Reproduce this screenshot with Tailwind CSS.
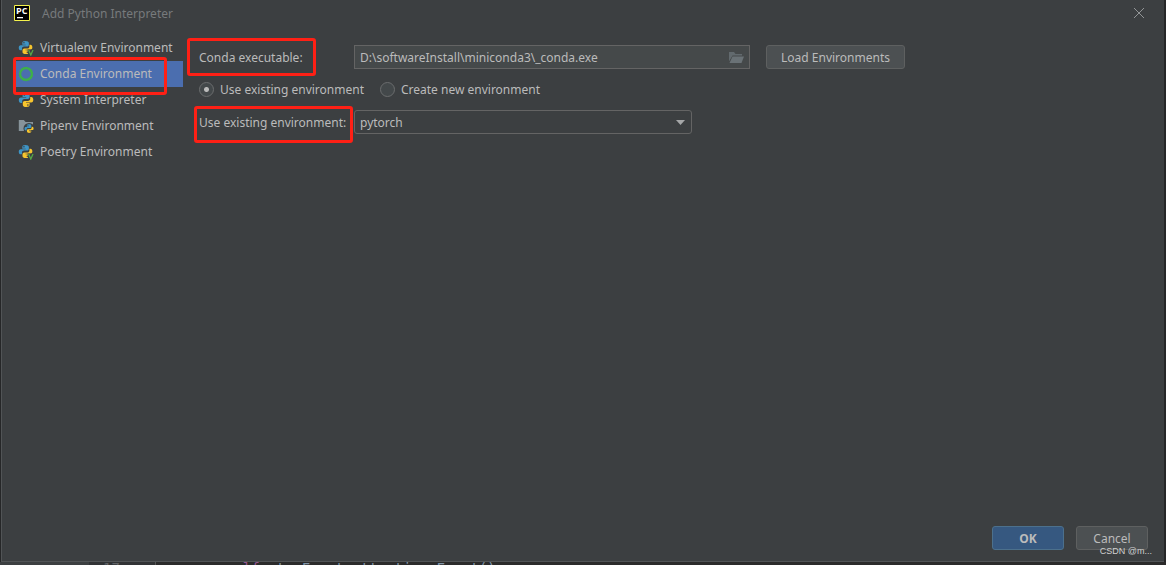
<!DOCTYPE html>
<html lang="en">
<head>
<meta charset="utf-8">
<title>Add Python Interpreter</title>
<script src="https://cdn.jsdelivr.net/npm/@tailwindcss/browser@4"></script>
</head>
<body class="flex h-screen flex-col overflow-hidden bg-[#262728] font-['Noto_Sans','Noto_Sans_CJK_SC',sans-serif] text-[12px] leading-5 text-[#bbbbbb]">
<svg class="hidden">
  <defs>
    <symbol id="python" viewBox="0 0 16 16">
      <path fill="#3e94c4" d="M7.8 1C5.4 1 4.6 2 4.6 3.3V5h3.6v.6H3C1.500 5.600.800 6.600.800 8.200S1.600 11 3 11h1.200V9.200c0-1.300 1-2.200 2.300-2.200h3.200c1.100 0 1.900-.9 1.900-2V3.300C11.600 1.800 10.300 1 7.800 1z"/>
      <circle cx="6.300" cy="3" r=".8" fill="#3c3f41"/>
      <path fill="#f7c52e" d="M8.400 15c2.400 0 3.200-1 3.200-2.300V11H8v-.6h5.200c1.500 0 2.100-1 2.100-2.600S14.600 5 13.200 5h-1v1.800c0 1.300-1 2.200-2.300 2.200H6.700c-1.100 0-1.900.9-1.900 2v1.700C4.800 14.200 6 15 8.400 15z"/>
      <circle cx="9.900" cy="13.100" r=".8" fill="#3c3f41"/>
    </symbol>
    <symbol id="pythonv" viewBox="0 0 16 16">
      <use href="#python" width="15" height="15"/>
      <path d="M9.500 9.500H16V16h-5.500z" fill="#3c3f41"/>
      <path d="M10.600 10l2.200 5 2.200-5" fill="none" stroke="#56a846" stroke-width="1.300"/>
    </symbol>
  </defs>
</svg>
<main class="relative mr-0.5 ml-px flex min-h-0 flex-1 flex-col border border-r-0 border-t-0 border-[#515456] bg-[#3c3f41]">
  <header class="flex h-[26px] shrink-0 items-center pr-[17px] pl-3 text-[#777a7c]">
    <svg class="size-4" viewBox="0 0 16 16"><path d="M.5.5h15v15H.5z" fill="#000" stroke="#f5f24d"/><text x="2" y="9" fill="#fff" font-family="Open Sans" font-weight="700" font-size="9">PC</text><path d="M3 12h6v1.300H3z" fill="#fff"/></svg>
    <h1 class="ml-3 flex-1 pt-0.5">Add Python Interpreter</h1>
    <button aria-label="Close" class="flex size-4 items-center justify-center"><svg class="size-3" viewBox="0 0 12 12"><path d="M1 1l10 10M11 1L1 11" stroke="#929596"/></svg></button>
  </header>
  <div class="flex min-h-0 flex-1 pt-[9px]">
    <nav class="ml-3.5 w-[167px] shrink-0 whitespace-nowrap">
      <a href="#" class="flex h-[26px] items-center gap-1.5 pl-0.5"><svg class="size-4 shrink-0"><use href="#pythonv"/></svg>Virtualenv Environment</a>
      <a href="#" aria-current="page" class="flex h-[26px] items-center gap-1.5 bg-[#4b6eaf] pl-0.5"><svg class="size-4" viewBox="0 0 16 16"><circle cx="8" cy="8" r="6" fill="none" stroke="#3eb049" stroke-width="2.500"/><circle cx="8" cy="8" r="7.300" fill="none" stroke="#4b6eaf" stroke-dasharray="1 2"/></svg>Conda Environment</a>
      <a href="#" class="flex h-[26px] items-center gap-1.5 pl-0.5"><svg class="size-4"><use href="#python"/></svg>System Interpreter</a>
      <a href="#" class="flex h-[26px] items-center gap-1.5 pl-0.5"><svg class="size-4" viewBox="0 0 16 16"><path d="M.8 2h5l1.800 2H15v9H.8z" fill="#87939a"/><circle cx="11" cy="10.500" r="5.500" fill="#3c3f41"/><use href="#python" x="6" y="5.500" width="10" height="10"/></svg>Pipenv Environment</a>
      <a href="#" class="flex h-[26px] items-center gap-1.5 pl-0.5"><svg class="size-4"><use href="#pythonv"/></svg>Poetry Environment</a>
    </nav>
    <form class="ml-4 flex-1 pt-2.5 pr-4">
      <div class="flex h-6 items-center">
        <label for="exe" class="w-[155px] shrink-0 pt-0.5">Conda executable:</label>
        <div class="relative mr-4 w-[396px]">
          <input id="exe" value="D:\softwareInstall\miniconda3\_conda.exe" class="block h-6 w-full border border-[#646464] bg-[#45494a] pr-7 pl-[5px] outline-none">
          <button type="button" aria-label="Browse" class="absolute top-1 right-1.5 size-4"><svg class="size-4" viewBox="0 0 16 16"><path d="M1 12.500V3h5l1.500 2H14v1.500H4.500z" fill="#626a6e"/><path d="M4.500 7.500H16L13.500 14H1.500z" fill="#6a7276"/></svg></button>
        </div>
        <button type="button" class="h-6 w-[139px] rounded-[3px] border border-[#5e6060] bg-[#4c5052] pt-0.5">Load Environments</button>
      </div>
      <div class="mt-2.5 flex h-5 items-center">
        <label class="mr-4 flex items-center gap-1.5"><input type="radio" name="mode" checked class="size-[15px] appearance-none rounded-full border border-[#6b6d6e] bg-[#43484a] checked:bg-[radial-gradient(circle,#bbbbbb_2px,transparent_3px)]"><span class="pt-0.5">Use existing environment</span></label>
        <label class="flex items-center gap-1.5"><input type="radio" name="mode" class="size-[15px] appearance-none rounded-full border border-[#6b6d6e] bg-[#43484a] checked:bg-[radial-gradient(circle,#bbbbbb_2px,transparent_3px)]"><span class="pt-0.5">Create new environment</span></label>
      </div>
      <div class="mt-[11px] flex h-6 items-center">
        <label for="env" class="w-[155px] shrink-0 pt-0.5 whitespace-nowrap">Use existing environment:</label>
        <div class="relative w-[338px]">
          <select id="env" class="block h-6 w-full appearance-none rounded-[3px] border border-[#646464] bg-[#3c3f41] pt-0.5 pl-[5px] outline-none"><option>pytorch</option></select>
          <svg class="pointer-events-none absolute top-2.5 right-[7px] h-[5px] w-[9px]" viewBox="0 0 9 5"><path d="M0 0h9L4.500 5z" fill="#a5a7a8"/></svg>
        </div>
      </div>
    </form>
  </div>
  <footer class="flex justify-end gap-3 pr-4 pb-[11px]">
    <button class="h-6 w-[72px] rounded-[3px] border border-[#4c708c] bg-[#365880] pt-0.5 font-bold">OK</button>
    <button class="h-6 w-[72px] rounded-[3px] border border-[#5e6060] bg-[#4c5052] pt-0.5">Cancel</button>
  </footer>
  <div class="absolute top-[38px] left-[185px] h-[38px] w-[129px] rounded-[3px] border-3 border-[#ff2015]"></div>
  <div class="absolute top-[57px] left-[11px] h-[38px] w-[154px] rounded-[3px] border-3 border-[#ff2015]"></div>
  <div class="absolute top-[106px] left-[192px] h-[37px] w-[159px] rounded-[3px] border-3 border-[#ff2015]"></div>
  <p class="absolute right-3 bottom-1 font-['Liberation_Sans','Noto_Sans_CJK_SC',sans-serif] text-[9px] leading-3 text-[#d0d0d0]">CSDN @m...</p>
</main>
<div class="flex h-[3px] shrink-0 overflow-hidden bg-[#2b2b2b] font-['DejaVu_Sans_Mono',monospace] text-[14px] leading-3 text-[#8195a8]">
  <span class="w-[89px] shrink-0 bg-[#3c3f41]"></span>
  <span class="w-[67px] shrink-0 border-r border-[#555555] bg-[#313335] pl-3.5 text-[#606366]">17</span>
  <span class="pl-[70px] whitespace-nowrap"><span class="text-[#94558d]">self</span>.atx_Front_attention_Event()</span>
</div>
</body>
</html>
